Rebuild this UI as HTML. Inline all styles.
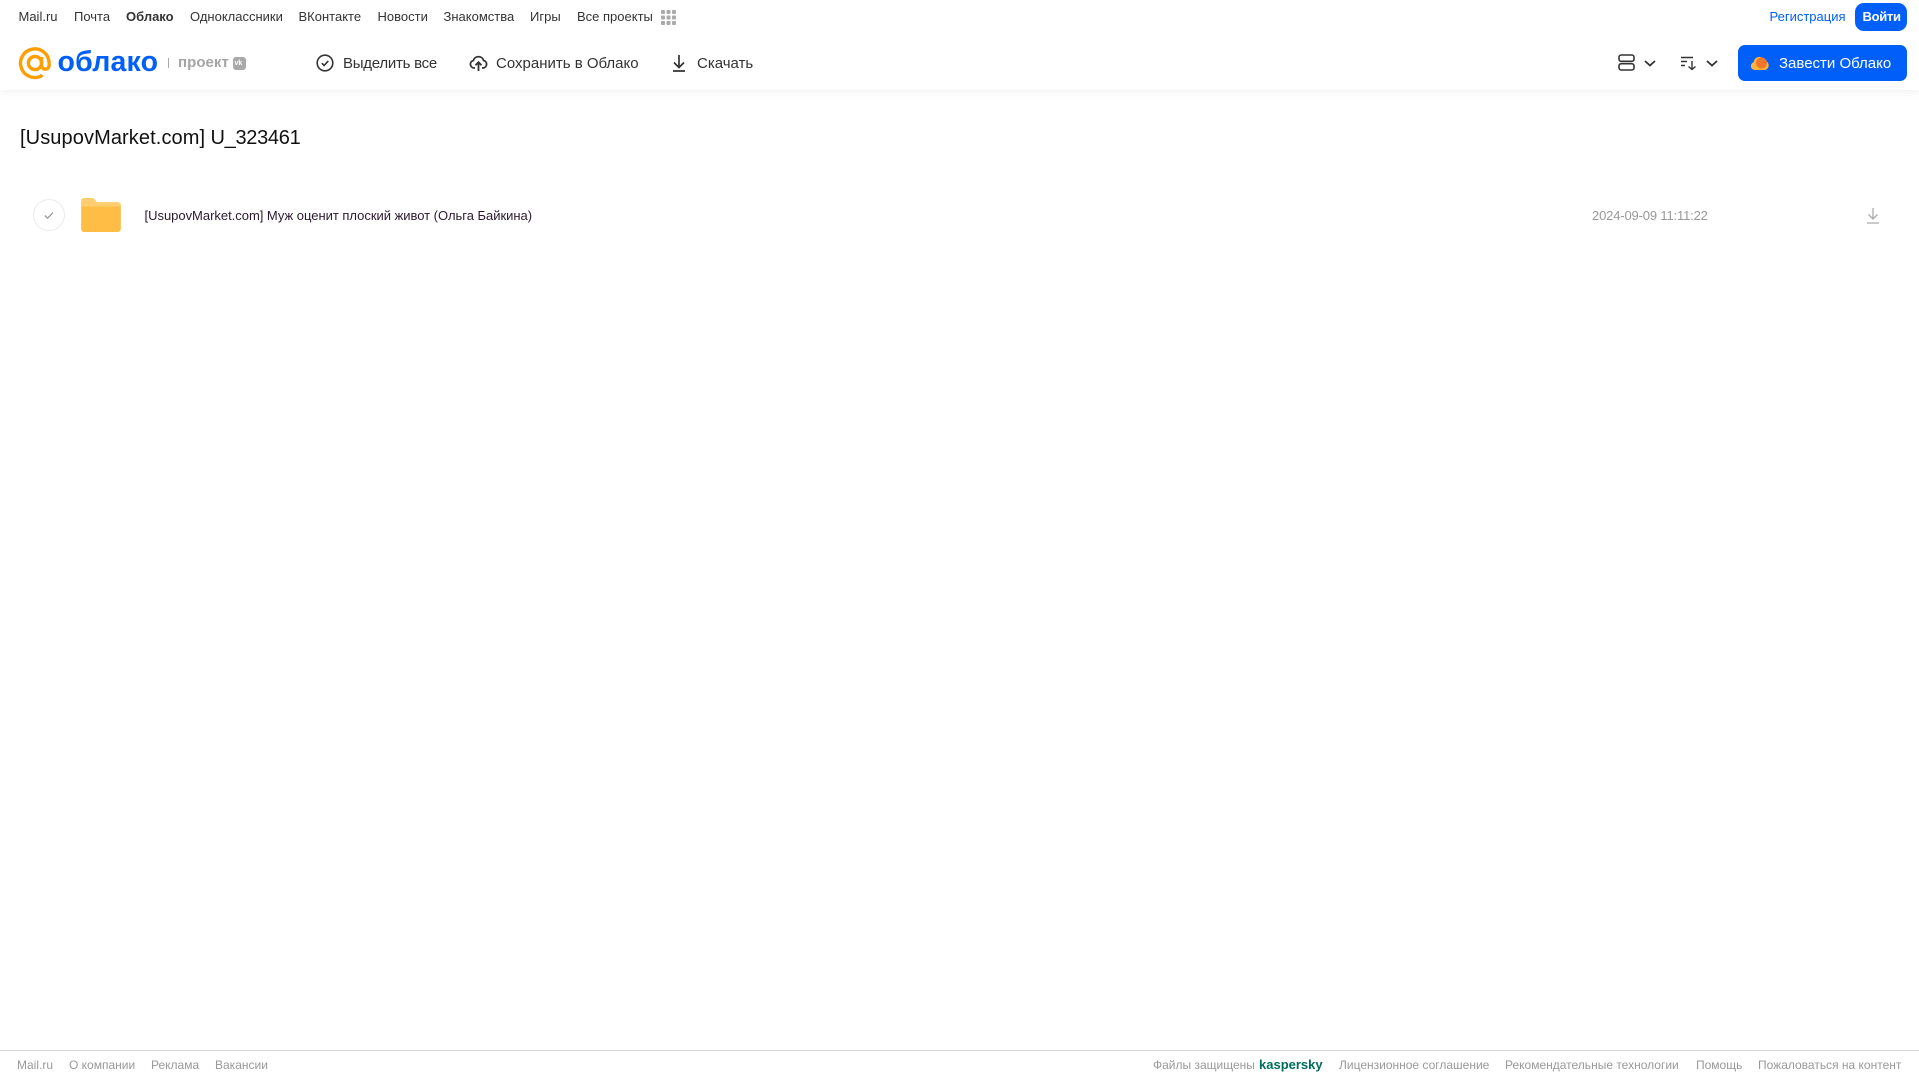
<!DOCTYPE html>
<html lang="ru"><head><meta charset="utf-8"><title>Облако</title>
<style>
html,body{margin:0;padding:0;width:1919px;height:1079px;overflow:hidden;background:#fff;font-family:"Liberation Sans",sans-serif}
.t{position:absolute;white-space:nowrap;line-height:20px;height:20px}
.n{font-size:13px;color:#333;top:6.5px}
.a{font-size:15px;color:#333;top:54px}
.f{font-size:12px;color:#999;top:1055px}
svg{position:absolute;overflow:visible}
#hd{position:absolute;left:0;top:0;width:1919px;height:90px;background:#fff;box-shadow:0 2px 8px rgba(0,0,0,.06)}
</style></head><body>
<div id="hd"></div>
<span class="t n" style="left:18.5px">Mail.ru</span>
<span class="t n" style="left:74px">Почта</span>
<span class="t n" style="left:126px;font-weight:bold">Облако</span>
<span class="t n" style="left:190px">Одноклассники</span>
<span class="t n" style="left:298.5px">ВКонтакте</span>
<span class="t n" style="left:377.5px">Новости</span>
<span class="t n" style="left:443.5px">Знакомства</span>
<span class="t n" style="left:530px">Игры</span>
<span class="t n" style="left:577px">Все проекты</span>
<svg style="left:661px;top:10px" width="15" height="15" fill="#aaa"><rect width="4" height="4" rx="1"/><rect x="5.5" width="4" height="4" rx="1"/><rect x="11" width="4" height="4" rx="1"/><rect y="5.5" width="4" height="4" rx="1"/><rect x="5.5" y="5.5" width="4" height="4" rx="1"/><rect x="11" y="5.5" width="4" height="4" rx="1"/><rect y="11" width="4" height="4" rx="1"/><rect x="5.5" y="11" width="4" height="4" rx="1"/><rect x="11" y="11" width="4" height="4" rx="1"/></svg>
<span class="t n" style="left:1769.5px;color:#005ff9">Регистрация</span>
<div style="position:absolute;left:1855px;top:3px;width:52px;height:28px;border-radius:9px;background:#005ff9"></div>
<span class="t n" style="left:1862.5px;color:#fff;font-weight:bold;letter-spacing:-.3px">Войти</span>

<svg style="left:19px;top:47px" width="32" height="32" viewBox="0 0 34 34" fill="none" stroke="#ff9e00" stroke-width="3.6"><circle cx="17" cy="17" r="7"/><path d="M24 10.5V19.5a4 4 0 0 0 8 0V17A15.2 15.2 0 1 0 25 30"/></svg>
<span class="t" style="left:57.5px;top:47px;height:30px;line-height:30px;font-size:28.5px;font-weight:bold;color:#005ff9;letter-spacing:.2px">облако</span>
<div style="position:absolute;left:168px;top:58px;width:1px;height:10px;background:#aaa"></div>
<span class="t" style="left:178px;top:53px;font-size:15px;font-weight:bold;color:#a5a5a5;letter-spacing:.05px">проект</span>
<div style="position:absolute;left:233px;top:57px;width:13px;height:13px;border-radius:3px;background:#a9a9a9"></div>
<span class="t" style="left:234.5px;top:53.5px;font-size:7px;font-weight:bold;color:#fff">vk</span>

<svg style="left:316px;top:54px" width="18" height="18" viewBox="0 0 18 18" fill="none" stroke="#333" stroke-width="1.6"><circle cx="9" cy="9" r="7.8"/><path d="M5.8 9.2l2.3 2.3 4.2-4.6"/></svg>
<span class="t a" style="left:343px;letter-spacing:-.25px">Выделить все</span>
<svg style="left:469px;top:54px" width="19" height="18" viewBox="0 0 19 18" fill="none" stroke="#333" stroke-width="1.8"><path d="M6 14H5A3.8 3.8 0 0 1 4.4 6.5 5.3 5.3 0 0 1 14.6 6.5 3.8 3.8 0 0 1 14 14H13"/><path d="M9.5 17V8.5M6.5 11.2l3-3 3 3"/></svg>
<span class="t a" style="left:496px">Сохранить в Облако</span>
<svg style="left:671px;top:54px" width="16" height="18" viewBox="0 0 16 18" fill="none" stroke="#333" stroke-width="1.7"><path d="M8 1v12M3 8.5l5 5 5-5M2 17h12"/></svg>
<span class="t a" style="left:697px">Скачать</span>

<svg style="left:1618px;top:54px" width="17" height="17" viewBox="0 0 17 17" fill="none" stroke="#333" stroke-width="1.6"><rect x="1" y="1" width="15" height="6.3" rx="2.2"/><rect x="1" y="9.7" width="15" height="6.3" rx="2.2"/></svg>
<svg style="left:1644px;top:60px" width="12" height="7" fill="none" stroke="#333" stroke-width="1.8"><path d="M1 1l5 4.500L11 1"/></svg>
<svg style="left:1681px;top:56px" width="16" height="15" viewBox="0 0 16 15" fill="none" stroke="#333" stroke-width="1.4"><path d="M0 1.500h12M0 5.500h6M0 9.500h4M11 5v8.500M7.500 10.500l3.500 3 3.500-3"/></svg>
<svg style="left:1706px;top:60px" width="12" height="7" fill="none" stroke="#333" stroke-width="1.8"><path d="M1 1l5 4.500L11 1"/></svg>
<div style="position:absolute;left:1738px;top:45px;width:169px;height:36px;border-radius:7px;background:#005ff9"></div>
<svg style="left:1750px;top:54px" width="20" height="17" viewBox="0 0 20 17"><path d="M4.500 16A4 4 0 0 1 3.600 8.200 5.800 5.800 0 0 1 14.800 6.600 4.800 4.800 0 0 1 15 16Z" fill="#ffb43a"/><circle cx="11.500" cy="9" r="5.500" fill="#f5762a"/></svg>
<span class="t a" style="left:1779px;color:#fff">Завести Облако</span>

<span class="t" style="left:20px;top:128px;font-size:20px;color:#111;letter-spacing:.1px">[UsupovMarket.com]</span>
<span class="t" style="left:210.5px;top:128px;font-size:20px;color:#111;letter-spacing:-.3px">U_323461</span>

<svg style="left:33px;top:199px" width="32" height="32" fill="none"><circle cx="16" cy="16" r="15.500" stroke="#ececec"/><path d="M11.800 16.500l2.800 2.700 5.400-5.600" stroke="#999" stroke-width="1.300"/></svg>
<svg style="left:81px;top:198px" width="40" height="34" viewBox="0 0 42 36"><path d="M0 3a3 3 0 0 1 3-3h8c2 0 3.500 1 4.500 3l1 1.500H39a3 3 0 0 1 3 3V33a3 3 0 0 1-3 3H3a3 3 0 0 1-3-3Z" fill="#ffbd45"/><path d="M0 9h42V7.500a3 3 0 0 0-3-3H16.500C15 2 13.500 0 11 0H3a3 3 0 0 0-3 3Z" fill="#ffce70"/></svg>
<span class="t" style="left:144.500px;top:206px;font-size:13px;color:#2b1a2e;letter-spacing:-.02px">[UsupovMarket.com] Муж оценит плоский живот (Ольга Байкина)</span>
<span class="t" style="left:1592px;top:206px;font-size:13px;color:#999;letter-spacing:-.16px">2024-09-09 11:11:22</span>
<svg style="left:1866px;top:207px" width="14" height="17" viewBox="0 0 14 17" fill="none" stroke="#aaa" stroke-width="1.300"><path d="M7 1v10.500M2.500 7.500L7 12l4.500-4.500M1 16h12"/></svg>

<div style="position:absolute;left:0;top:1050px;width:1919px;height:1px;background:#d8d8d8"></div>
<span class="t f" style="left:17px">Mail.ru</span>
<span class="t f" style="left:69px">О компании</span>
<span class="t f" style="left:151px">Реклама</span>
<span class="t f" style="left:215px">Вакансии</span>
<span class="t f" style="left:1153px">Файлы защищены</span>
<span class="t f" style="left:1259px;font-weight:bold;font-size:13px;color:#006d5c">kaspersky</span>
<span class="t f" style="left:1339px">Лицензионное соглашение</span>
<span class="t f" style="left:1505px">Рекомендательные технологии</span>
<span class="t f" style="left:1696px">Помощь</span>
<span class="t f" style="left:1758px">Пожаловаться на контент</span>
</body></html>
